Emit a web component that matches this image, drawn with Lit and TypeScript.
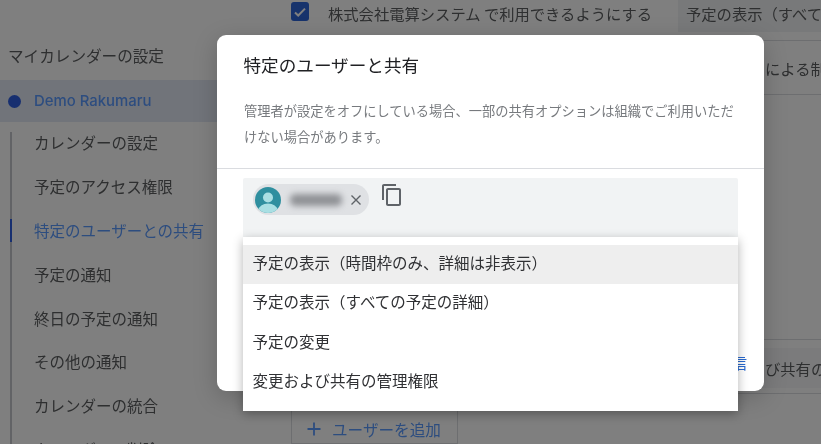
import { LitElement, html, css } from "lit";
import { customElement } from "lit/decorators.js";

const NAV = ["カレンダーの設定", "予定のアクセス権限", "特定のユーザーとの共有", "予定の通知", "終日の予定の通知", "その他の通知", "カレンダーの統合", "カレンダーの削除"];
const MENU = ["予定の表示（時間枠のみ、詳細は非表示）", "予定の表示（すべての予定の詳細）", "予定の変更", "変更および共有の管理権限"];

@customElement("app-root")
export class AppRoot extends LitElement {
  static styles = css`
    :host {
      display: block;
      position: relative;
      width: 821px;
      height: 444px;
      overflow: hidden;
      background: #fff;
      color: #5c5e60;
      font-family: "Noto Sans CJK JP", "Noto Sans", sans-serif;
      filter: blur(0.4px);
    }
    .page { display: flex; height: 444px; overflow: hidden; }
    .side { width: 291px; flex: none; padding-top: 44px; box-sizing: border-box; }
    .side-title { font-size: 15.6px; line-height: 22px; padding-left: 8px; height: 36px; }
    .cal-row {
      height: 42px; display: flex; align-items: center; gap: 13px; padding-left: 8px;
      background: #e2e8f5; margin-right: 74px;
      color: #5a9aff; font-size: 14.9px; font-weight: 500;
      font-family: "Inter", "Noto Sans", sans-serif;
    }
    .dot { width: 13px; height: 13px; border-radius: 50%; background: #2f5fe0; flex: none; }
    .nav { margin: 10px 0 0 10px; padding: 0; border-left: 2px solid #c4c7cc; list-style: none; }
    .nav li {
      height: 43.9px; line-height: 21px; padding-left: 22px; font-size: 15.5px;
      box-sizing: border-box; position: relative; white-space: nowrap;
    }
    .nav li.on { color: #5a9aff; }
    .nav li.on::before {
      content: ""; position: absolute; left: -2px; top: -1px; width: 2px; height: 23px; background: #2f5fe0;
    }
    .main { flex: 1; min-width: 0; display: flex; flex-direction: column; white-space: nowrap; font-size: 15.3px; }
    .top { height: 32px; display: flex; align-items: flex-start; }
    .check {
      width: 18px; height: 19px; margin-top: 2px; border-radius: 3px; background: #2f66d8; flex: none;
      display: flex; align-items: center; justify-content: center;
    }
    .top-label { margin-left: 19px; width: 350px; line-height: 26px; flex: none; }
    .select { flex: 1; height: 32px; background: #f1f3f4; padding-left: 8px; line-height: 26px; overflow: hidden; }
    .row { border-bottom: 1px solid #dadce0; padding-left: 474px; overflow: hidden; box-sizing: border-box; }
    .r1 { margin-top: 8px; height: 58px; line-height: 54px; border-top: 1px solid #dadce0; }
    .spacer { height: 245px; border-bottom: 1px solid #dadce0; flex: none; box-sizing: border-box; }
    .r2 { height: 57px; line-height: 57px; background: linear-gradient(#fff 8px, #f6f7f8 8px, #f6f7f8 48px, #fff 48px); }
    .add {
      margin-top: 11px; width: 167px; height: 40px; box-sizing: border-box; border: 1px solid #dadce0;
      display: flex; align-items: center; color: #5a9aff; font-size: 15.6px; padding: 9px 0 0 14px; gap: 10px;
    }
    .scrim { position: absolute; inset: 0; background: rgba(0, 0, 0, 0.5); }
    .dialog {
      position: absolute; left: 217px; top: 35px; width: 547px; height: 356px; background: #fff;
      border-radius: 9px; overflow: hidden; display: flex; flex-direction: column;
      box-shadow: 0 6px 24px rgba(0,0,0,.2);
    }
    .dlg-title { font-size: 17.6px; line-height: 24px; color: #202124; padding: 18px 26.5px 0; font-weight: 400; margin: 0; }
    .dlg-desc {
      margin: 21px 0 0; padding: 0 27px; font-size: 13.25px; line-height: 26px; color: #777a7e; height: 70px; box-sizing: border-box;
    }
    .divider { height: 1px; background: #dadce0; flex: none; }
    .input {
      margin: 9px 26px 0; height: 59px; background: #f1f3f4; display: flex; align-items: flex-start; padding: 6px 0 0 10px;
      box-sizing: border-box; gap: 11px; border-radius: 2px 2px 0 0; flex: none;
    }
    .chip {
      width: 116px; height: 31px; border-radius: 16px; background: #dfe1e4; display: flex; align-items: center;
      box-sizing: border-box; padding-left: 2px; flex: none;
    }
    .avatar { width: 26px; height: 26px; flex: none; display: block; }
    .name { width: 52px; height: 12px; margin-left: 9px; background: #8f9195; border-radius: 5px; filter: blur(3px); }
    .x { margin-left: 8px; display: block; flex: none; }
    .copy { display: block; flex: none; margin-top: -1px; }
    .dlg-foot { flex: 1; display: flex; justify-content: flex-end; align-items: flex-end; padding: 0 17px 18px; }
    .send { color: #2a6bd0; font-size: 15px; line-height: 20px; }
    .menu {
      position: absolute; left: 243px; top: 237px; width: 495px; height: 174px; background: #fff; margin: 0; padding: 8px 0;
      box-sizing: border-box; list-style: none; box-shadow: 0 3px 10px rgba(0,0,0,.3);
    }
    .menu li {
      height: 39.3px; line-height: 35px; padding-left: 9.5px; font-size: 15.5px; color: #303134; white-space: nowrap;
    }
    .menu li.hover { background: #eeeeee; }
  `;

  render() {
    return html`
      <div class="page">
        <aside class="side">
          <div class="side-title">マイカレンダーの設定</div>
          <div class="cal-row"><span class="dot"></span>Demo Rakumaru</div>
          <ul class="nav">
            ${NAV.map((n, i) => html`<li class=${i === 2 ? "on" : ""}>${n}</li>`)}
          </ul>
        </aside>
        <main class="main">
          <div class="top">
            <span class="check">
              <svg width="14" height="14" viewBox="0 0 14 14"><path d="M2 7.5l3.2 3L12 3.6" fill="none" stroke="#fff" stroke-width="2"/></svg>
            </span>
            <span class="top-label">株式会社電算システム で利用できるようにする</span>
            <span class="select">予定の表示（すべての予定の詳細）</span>
          </div>
          <div class="row r1">による制限</div>
          <div class="spacer"></div>
          <div class="row r2">び共有の管理権限</div>
          <div class="add">
            <svg width="16" height="16" viewBox="0 0 16 16"><path d="M8 1.500v13M1.500 8h13" stroke="#5a9aff" stroke-width="1.800" fill="none"/></svg>
            <span>ユーザーを追加</span>
          </div>
        </main>
      </div>
      <div class="scrim"></div>
      <section class="dialog">
        <h2 class="dlg-title">特定のユーザーと共有</h2>
        <p class="dlg-desc">管理者が設定をオフにしている場合、一部の共有オプションは組織でご利用いただけない場合があります。</p>
        <div class="divider"></div>
        <div class="input">
          <div class="chip">
            <svg class="avatar" viewBox="0 0 26 26">
              <defs><clipPath id="c"><circle cx="13" cy="13" r="13"/></clipPath></defs>
              <circle cx="13" cy="13" r="13" fill="#2f8f9f"/>
              <g clip-path="url(#c)" fill="#a9dfe3">
                <circle cx="13" cy="10.500" r="5"/>
                <ellipse cx="13" cy="23" rx="9.500" ry="6.500"/>
              </g>
            </svg>
            <span class="name"></span>
            <svg class="x" width="12" height="12" viewBox="0 0 12 12"><path d="M1.500 1.500l9 9M10.500 1.500l-9 9" stroke="#5f6368" stroke-width="1.400" fill="none"/></svg>
          </div>
          <svg class="copy" width="24" height="24" viewBox="0 0 24 24"><path fill="#5f6368" d="M16 1H4c-1.100 0-2 .9-2 2v14h2V3h12V1zm3 4H8c-1.100 0-2 .9-2 2v14c0 1.100.9 2 2 2h11c1.100 0 2-.9 2-2V7c0-1.100-.9-2-2-2zm0 16H8V7h11v14z"/></svg>
        </div>
        <div class="dlg-foot"><span class="send">送信</span></div>
      </section>
      <ul class="menu">
        ${MENU.map((m, i) => html`<li class=${i === 0 ? "hover" : ""}>${m}</li>`)}
      </ul>
    `;
  }
}
